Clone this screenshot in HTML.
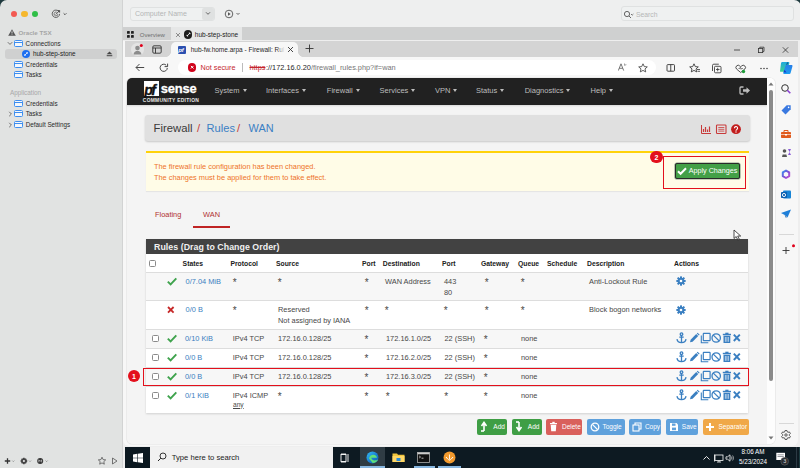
<!DOCTYPE html>
<html><head><meta charset="utf-8">
<style>
*{margin:0;padding:0;box-sizing:border-box}
html,body{width:800px;height:468px;overflow:hidden;background:#1f3a3e;font-family:"Liberation Sans",sans-serif}
.a{position:absolute}
.t{position:absolute;white-space:nowrap;line-height:1}
#side{left:0;top:0;width:122.2px;height:468px;background:#e1e3e2;border-radius:7px 0 0 0}
#tool{left:123px;top:0;width:678px;height:27px;background:#eeefef;border-radius:0 7px 0 0}
#tabs{left:123px;top:27px;width:677px;height:13.5px;background:#cfd0d0}
#win{left:123.2px;top:40px;width:676.8px;height:428px;background:#eeeeee}
#edge{left:125px;top:40px;width:673px;height:405px;background:#f7f7f7;border-radius:0 0 7px 7px;overflow:hidden}
#tb{left:125px;top:447px;width:675px;height:21px;background:#0d1a22}
.fold{position:absolute;width:9px;height:7px;border:1.2px solid #3d8ef0;border-radius:1.5px;background:#f4f7fb}
.fold:before{content:"";position:absolute;left:-1px;top:1px;width:8px;height:0;border-top:1px solid #3d8ef0}
.st{font-size:7px;color:#2a2a2a}
.nav{font-size:7.5px;color:#bdbdbd}
.car{display:inline-block;width:0;height:0;border-left:2.5px solid transparent;border-right:2.5px solid transparent;border-top:3px solid #bdbdbd;margin-left:3px;vertical-align:1px}
.th{font-size:6.8px;font-weight:bold;color:#212121}
.td{font-size:7.4px;color:#474747}
.lk{color:#3a7fc1}
.btn{position:absolute;top:419px;height:16px;border-radius:2px;color:#fff;font-size:6px;font-weight:bold}
.cb{position:absolute;width:7px;height:7px;border:1px solid #8a8a8a;border-radius:1.5px;background:#fff}
</style></head><body>
<!-- mac sidebar -->
<div id="side" class="a"></div>
<div class="a" style="left:10.5px;top:10.5px;width:6.5px;height:6.5px;border-radius:50%;background:#f25a52"></div>
<div class="a" style="left:21px;top:10.5px;width:6.5px;height:6.5px;border-radius:50%;background:#f5b82e"></div>
<div class="a" style="left:31.8px;top:10.5px;width:6.5px;height:6.5px;border-radius:50%;background:#2fbf47"></div>
<svg class="a" style="left:51px;top:9px" width="18" height="10" viewBox="0 0 18 10"><path d="M7.9 2.6A3.7 3.7 0 1 0 8.6 4.9" fill="none" stroke="#555" stroke-width=".9"/><path d="M5.8 3.2A1.9 1.9 0 1 0 6.9 5" fill="none" stroke="#555" stroke-width=".7"/><path d="M4.8 5.4L8.5 1.7M6.6 1.6h2v2" stroke="#444" stroke-width=".9" fill="none"/><path d="M12.6 4.3l1.4 1.4 1.4-1.4" stroke="#444" stroke-width=".9" fill="none"/></svg>
<svg class="a" style="left:8px;top:29px" width="8" height="7" viewBox="0 0 8 7"><path d="M4 .3L7.8 6.7H.2z" fill="#555"/><path d="M4 2.3v2.2M4 5.3v.6" stroke="#e2e3e3" stroke-width=".9"/></svg>
<div class="t st" style="left:18.5px;top:30.1px;font-size:6.2px;color:#a5a5a5;font-weight:bold">Oracle TSX</div>
<svg class="a" style="left:7px;top:41px" width="6" height="5" viewBox="0 0 6 5"><path d="M.8 1.2l2.2 2.2 2.2-2.2" stroke="#666" stroke-width=".9" fill="none"/></svg>
<div class="fold" style="left:14px;top:39.8px"></div>
<div class="t st" style="left:25.6px;top:40.6px;font-size:6.3px">Connections</div>
<div class="a" style="left:5px;top:48.7px;width:112px;height:10.3px;background:#cfd0d0;border-radius:3px"></div>
<div class="a" style="left:22px;top:50px;width:8px;height:8px;border-radius:50%;background:#1e6ff0"></div>
<svg class="a" style="left:22px;top:50px" width="8" height="8" viewBox="0 0 8 8"><path d="M2.6 5.4l2.8-2.8M4.3 2.6h1.1v1.1M3.7 5.4H2.6V4.3" stroke="#fff" stroke-width=".8" fill="none"/></svg>
<div class="t st" style="left:33px;top:50.9px;font-size:6.4px;color:#222">hub-step-stone</div>
<svg class="a" style="left:106px;top:51px" width="7" height="6" viewBox="0 0 7 6"><path d="M3.5 .5L6.3 3.3H.7z" fill="#444"/><rect x=".7" y="4.2" width="5.6" height="1" fill="#444"/></svg>
<div class="fold" style="left:14px;top:60.8px"></div>
<div class="t st" style="left:25.6px;top:61.5px;font-size:6.3px">Credentials</div>
<div class="fold" style="left:14px;top:71.3px"></div>
<div class="t st" style="left:25.6px;top:72px;font-size:6.3px">Tasks</div>
<div class="t st" style="left:9.9px;top:89.5px;font-size:6.4px;color:#a8a8a8">Application</div>
<div class="fold" style="left:14px;top:99.9px"></div>
<div class="t st" style="left:25.7px;top:100.6px;font-size:6.3px">Credentials</div>
<svg class="a" style="left:8px;top:111.1px" width="5" height="6" viewBox="0 0 5 6"><path d="M1.2 .8l2.2 2.2-2.2 2.2" stroke="#666" stroke-width=".9" fill="none"/></svg>
<div class="fold" style="left:14px;top:110.4px"></div>
<div class="t st" style="left:25.7px;top:111.1px;font-size:6.3px">Tasks</div>
<svg class="a" style="left:8px;top:121.6px" width="5" height="6" viewBox="0 0 5 6"><path d="M1.2 .8l2.2 2.2-2.2 2.2" stroke="#666" stroke-width=".9" fill="none"/></svg>
<div class="fold" style="left:14px;top:120.9px"></div>
<div class="t st" style="left:25.7px;top:121.6px;font-size:6.3px">Default Settings</div>
<!-- sidebar bottom -->
<svg class="a" style="left:3px;top:456px" width="50" height="10" viewBox="0 0 50 10"><path d="M4.5 2.3v5.4M1.8 5h5.4" stroke="#333" stroke-width="1.3"/><path d="M9.3 4.6l1 1 1-1" stroke="#777" stroke-width=".7" fill="none"/><path d="M23.33 4.08 L24.22 4.26 L24.22 5.74 L23.33 5.92 L23.27 6.07 L23.77 6.82 L22.72 7.87 L21.97 7.37 L21.82 7.43 L21.64 8.32 L20.16 8.32 L19.98 7.43 L19.83 7.37 L19.08 7.87 L18.03 6.82 L18.53 6.07 L18.47 5.92 L17.58 5.74 L17.58 4.26 L18.47 4.08 L18.53 3.93 L18.03 3.18 L19.08 2.13 L19.83 2.63 L19.98 2.57 L20.16 1.68 L21.64 1.68 L21.82 2.57 L21.97 2.63 L22.72 2.13 L23.77 3.18 L23.27 3.93z" fill="#444"/><circle cx="20.9" cy="5" r="1.1" fill="#e2e3e3"/><path d="M26 4.6l1 1 1-1" stroke="#777" stroke-width=".7" fill="none"/><circle cx="37.2" cy="5" r="3" fill="#333"/><path d="M35.8 6.3V3.8l1.4 1.6 1.4-1.6v2.5" stroke="#e2e3e3" stroke-width=".6" fill="none"/><path d="M42.6 4.6l1 1 1-1" stroke="#777" stroke-width=".7" fill="none"/></svg>
<svg class="a" style="left:97px;top:456px" width="24" height="10" viewBox="0 0 24 10"><path d="M5 1.2l1.1 2.4 2.6.3-1.9 1.7.5 2.6L5 6.9 2.7 8.2l.5-2.6L1.3 3.9l2.6-.3z" fill="none" stroke="#555" stroke-width=".8"/><path d="M15.5 2v6l4.5-3z" fill="none" stroke="#555" stroke-width=".8"/></svg>

<!-- royal toolbar -->
<div id="tool" class="a"></div>
<div class="a" style="left:122px;top:0;width:1.2px;height:468px;background:#d2d3d3"></div>
<div class="a" style="left:129.6px;top:6.6px;width:85px;height:14px;border-radius:3px;background:#eff1f1;border:0.6px solid #dfe1e1"></div>
<div class="a" style="left:202px;top:7.5px;width:11.5px;height:12px;border-radius:2px;background:#dfe1e1"></div>
<svg class="a" style="left:205px;top:11px" width="6" height="5" viewBox="0 0 6 5"><path d="M1 1.3l2 2 2-2" stroke="#555" stroke-width=".9" fill="none"/></svg>
<div class="t" style="left:134.9px;top:10.5px;font-size:7.1px;color:#b4b6b6">Computer Name</div>
<svg class="a" style="left:224px;top:9px" width="20" height="10" viewBox="0 0 20 10"><circle cx="5" cy="5" r="3.8" fill="none" stroke="#555" stroke-width=".9"/><path d="M4 3.2v3.6L6.7 5z" fill="#555"/><path d="M12.5 4l1.5 1.5L15.5 4" stroke="#555" stroke-width=".9" fill="none"/></svg>
<div class="a" style="left:621px;top:6px;width:173px;height:14.5px;border-radius:3px;background:#eff1f1;border:0.6px solid #dfe1e1"></div>
<svg class="a" style="left:623px;top:9.5px" width="12" height="9" viewBox="0 0 12 9"><circle cx="4" cy="4" r="2.6" fill="none" stroke="#555" stroke-width=".9"/><path d="M6 6l2 2" stroke="#555" stroke-width=".9"/><path d="M8 4l1.2 1.2L10.4 4" stroke="#555" stroke-width=".8" fill="none"/></svg>
<div class="t" style="left:636px;top:11.5px;font-size:6.8px;color:#b5b7b7">Search</div>

<!-- royal tabs -->
<div id="tabs" class="a"></div>
<div class="a" style="left:170.7px;top:27px;width:71px;height:13px;background:#e6e7e7"></div>
<svg class="a" style="left:126.8px;top:30.8px" width="7" height="7" viewBox="0 0 7 7"><rect x="0" y="0" width="2.8" height="2.8" rx=".6" fill="#222"/><rect x="4" y="0" width="2.8" height="2.8" rx=".6" fill="#222"/><rect x="0" y="4" width="2.8" height="2.8" rx=".6" fill="#222"/><rect x="4" y="4" width="2.8" height="2.8" rx=".6" fill="#222"/></svg>
<div class="t" style="left:139.8px;top:31.7px;font-size:6px;color:#6e6e6e">Overview</div>
<svg class="a" style="left:175px;top:32px" width="6" height="6" viewBox="0 0 6 6"><path d="M1 1l4 4M5 1L1 5" stroke="#666" stroke-width=".7"/></svg>
<div class="a" style="left:183.7px;top:30px;width:8.8px;height:8.8px;border-radius:50%;background:#1e1e1e"></div>
<svg class="a" style="left:183.7px;top:30px" width="9" height="9" viewBox="0 0 9 9"><path d="M3 6l3-3M4.8 3H6v1.2M4.2 6H3V4.8" stroke="#fff" stroke-width=".8" fill="none"/></svg>
<div class="t" style="left:194.8px;top:32px;font-size:6.5px;color:#1a1a1a">hub-step-stone</div>

<div id="win" class="a"></div>
<!-- edge frame -->
<div class="a" style="left:123.2px;top:40.5px;width:674.8px;height:405px;background:#f7f7f7;border-radius:0 0 6px 6px"></div>
<div class="a" style="left:125px;top:40.5px;width:673px;height:16.5px;background:#d4d4d4"></div>
<!-- profile -->
<div class="a" style="left:131px;top:43px;width:12.5px;height:12.5px;border-radius:50%;background:#e4e4e4"></div>
<svg class="a" style="left:131px;top:43px" width="13" height="13" viewBox="0 0 13 13"><circle cx="6.5" cy="5" r="2.3" fill="#8c8c8c"/><path d="M2.5 11.5c.5-2.5 2-3.7 4-3.7s3.5 1.2 4 3.7z" fill="#8c8c8c"/><circle cx="10.3" cy="2.6" r="1.5" fill="#e0001b"/></svg>
<svg class="a" style="left:152px;top:45px" width="10" height="9" viewBox="0 0 10 9"><rect x=".8" y=".8" width="8.4" height="7.4" rx="1.2" fill="none" stroke="#333" stroke-width=".9"/><path d="M.8 3h8.4M3.5 3v5.2" stroke="#333" stroke-width=".9"/></svg>
<!-- active tab -->
<div class="a" style="left:171px;top:42px;width:127px;height:15px;background:#f7f7f7;border-radius:5px 5px 0 0"></div>
<div class="a" style="left:166px;top:52px;width:5px;height:5px;background:radial-gradient(circle at 0 0,#d4d4d4 4.6px,#f7f7f7 5px)"></div>
<div class="a" style="left:298px;top:52px;width:5px;height:5px;background:radial-gradient(circle at 100% 0,#d4d4d4 4.6px,#f7f7f7 5px)"></div>
<div class="a" style="left:177.5px;top:45.5px;width:8px;height:8px;background:#2b4fb0;border-radius:1px"></div>
<div class="t" style="left:178.3px;top:46.5px;font-size:6px;color:#fff;font-style:italic;font-weight:bold;letter-spacing:-.3px">pf</div>
<div class="t" style="left:190.7px;top:46.6px;font-size:6.5px;color:#1f1f1f">hub-fw.home.arpa - Firewall: Rul</div>
<div class="a" style="left:276px;top:43px;width:9px;height:12px;background:linear-gradient(90deg,rgba(247,247,247,0),#f7f7f7)"></div>
<svg class="a" style="left:287px;top:46px" width="7" height="7" viewBox="0 0 7 7"><path d="M1 1l5 5M6 1L1 6" stroke="#333" stroke-width=".9"/></svg>
<svg class="a" style="left:305px;top:44px" width="9" height="9" viewBox="0 0 9 9"><path d="M4.5 .5v8M.5 4.5h8" stroke="#333" stroke-width=".9"/></svg>
<svg class="a" style="left:733px;top:45.5px" width="60" height="8" viewBox="0 0 60 8"><path d="M1 4h6" stroke="#333" stroke-width=".8"/><rect x="25.5" y="2.4" width="4.2" height="4.2" fill="none" stroke="#333" stroke-width=".8"/><path d="M26.8 2.4V1.2h4.2v4.2H29.7" stroke="#333" stroke-width=".8" fill="none"/><path d="M49.8 1.3l5.4 5.4M55.2 1.3l-5.4 5.4" stroke="#333" stroke-width=".8"/></svg>
<!-- address row -->
<svg class="a" style="left:135px;top:63px" width="10" height="9" viewBox="0 0 10 9"><path d="M9.2 4.5H1.2M4.5 1L1 4.5 4.5 8" stroke="#333" stroke-width=".9" fill="none"/></svg>
<svg class="a" style="left:158.5px;top:63px" width="10" height="10" viewBox="0 0 10 10"><path d="M8.3 5A3.6 3.6 0 1 1 7.2 2.2" stroke="#333" stroke-width=".9" fill="none"/><path d="M8.6 .6v3H5.6" stroke="#333" stroke-width=".9" fill="none"/></svg>
<div class="a" style="left:177.75px;top:59.5px;width:478px;height:15.8px;background:#fff;border-radius:8px"></div>
<div class="a" style="left:187.8px;top:63.4px;width:8.3px;height:8.3px;border-radius:50%;background:#d0021b"></div>
<svg class="a" style="left:187.8px;top:63.4px" width="9" height="9" viewBox="0 0 9 9"><path d="M2.9 2.9l2.6 2.6M5.5 2.9L2.9 5.5" stroke="#fff" stroke-width="1"/></svg>
<div class="t" style="left:200.5px;top:63.9px;font-size:7.25px;color:#c4262e">Not secure</div>
<div class="a" style="left:242px;top:63px;width:.8px;height:9px;background:#bbb"></div>
<div class="t" style="left:249.5px;top:63.9px;font-size:7.35px;color:#c4262e;text-decoration:line-through">https</div>
<div class="t" style="left:266px;top:63.9px;font-size:7.35px;color:#1f1f1f">://172.16.0.20<span style="color:#767676">/firewall_rules.php?if=wan</span></div>
<svg class="a" style="left:618px;top:62px" width="60" height="12" viewBox="0 0 60 12"><path d="M.3 8.6L3 1.8l2.7 6.8M1.3 6.3h3.4" stroke="#555" stroke-width=".8" fill="none"/><path d="M6.5 1.5v2.2M7.6 2c.4.4.4 1.1 0 1.5" stroke="#555" stroke-width=".55" fill="none"/><path d="M25 1.8l1.3 2.8 3 .3-2.3 2 .7 3L25 8.4l-2.7 1.5.7-3-2.3-2 3-.3z" fill="none" stroke="#444" stroke-width=".85"/><rect x="49" y="2.6" width="7.5" height="6.6" rx=".8" fill="none" stroke="#333" stroke-width=".9"/><path d="M52.75 2.6v6.6" stroke="#333" stroke-width=".9"/></svg>
<svg class="a" style="left:688px;top:61.5px" width="104" height="13" viewBox="0 0 104 13"><path d="M6 1.8l1.3 2.8 3 .3-2.3 2 .7 3L6 8.4 3.3 9.9l.7-3-2.3-2 3-.3z" fill="none" stroke="#333" stroke-width=".85"/><path d="M9 7.5h3M9.5 9.3h2.5" stroke="#333" stroke-width=".8"/><rect x="26.5" y="4.3" width="6.5" height="6.5" rx="1" fill="none" stroke="#333" stroke-width=".85"/><path d="M24.5 9V3.5a1.3 1.3 0 0 1 1.3-1.3h5" stroke="#333" stroke-width=".85" fill="none"/><path d="M29.7 5.8v3.5M28 7.5h3.5" stroke="#333" stroke-width=".8"/><path d="M52.7 10.5L48.5 7a2.2 2.2 0 0 1 3.3-3l.9.8.9-.8a2.2 2.2 0 0 1 3.3 3z" fill="none" stroke="#333" stroke-width=".85"/><path d="M50.5 6.5h1.2l.6-1.2.8 2 .5-.8h1.3" stroke="#333" stroke-width=".6" fill="none"/><circle cx="55.5" cy="9.5" r="1.7" fill="#1f9d3a"/><circle cx="73" cy="6.5" r=".75" fill="#333"/><circle cx="76" cy="6.5" r=".75" fill="#333"/><circle cx="79" cy="6.5" r=".75" fill="#333"/></svg>
<svg class="a" style="left:779px;top:61px" width="15" height="14" viewBox="0 0 15 14"><defs><linearGradient id="cp1" x1="0" y1="0" x2="0" y2="1"><stop offset="0" stop-color="#1fa8e0"/><stop offset="1" stop-color="#3fd18c"/></linearGradient><linearGradient id="cp2" x1="0" y1="0" x2="0" y2="1"><stop offset="0" stop-color="#2a7ee8"/><stop offset="1" stop-color="#1a9cf0"/></linearGradient></defs><path d="M3.2 1h6.2c.9 0 1.2.6.9 1.4L8 9.8c-.3.7-.8 1-1.6 1H2c-.9 0-1.2-.6-.9-1.4L2 2.2C2.2 1.4 2.6 1 3.2 1z" fill="url(#cp1)"/><path d="M6.3 4h6.2c.9 0 1.2.6.9 1.4l-1.8 6.5c-.3.8-.7 1.1-1.5 1.1H5.2c-.9 0-1.2-.6-.9-1.4L6.4 5c.2-.7.6-1 1-1z" fill="url(#cp2)"/><path d="M8.2 1.2c.8 0 1.2.5 1 1.2L9 3.2 6.8 4z" fill="#0b4f8a" opacity=".8"/><path d="M4.6 11.2l.9-2.4 2 2.6z" fill="#1537c8"/></svg>
<!-- viewport -->
<div class="a" style="left:127px;top:77.7px;width:648px;height:366.5px;background:#f4f4f4;border-radius:5px 5px 5px 5px;box-shadow:0 0 0 .6px #e3e3e3"></div>
<div class="a" style="left:127px;top:77.7px;width:640px;height:27.3px;background:#212121;border-radius:5px 0 0 0;box-shadow:0 1px 2px rgba(0,0,0,.12)"></div>
<!-- logo -->
<div class="a" style="left:144px;top:81px;width:15px;height:15px;background:#fff"></div>
<div class="t" style="left:144.3px;top:82.6px;font-size:14.2px;font-weight:bold;font-style:italic;color:#111;letter-spacing:-1.6px;-webkit-text-stroke:.35px #111">pf</div>
<div class="t" style="left:160.8px;top:83.2px;font-size:12.9px;font-weight:bold;color:#fff;letter-spacing:-.15px;-webkit-text-stroke:.3px #fff">sense</div>
<div class="t" style="left:142.8px;top:98.6px;font-size:4.9px;font-weight:bold;color:#e8e8e8;letter-spacing:.3px">COMMUNITY EDITION</div>
<!-- nav -->
<div class="t nav" style="left:214.5px;top:87px">System<i class="car"></i></div>
<div class="t nav" style="left:266px;top:87px">Interfaces<i class="car"></i></div>
<div class="t nav" style="left:326.8px;top:87px">Firewall<i class="car"></i></div>
<div class="t nav" style="left:379.6px;top:87px">Services<i class="car"></i></div>
<div class="t nav" style="left:434.9px;top:87px">VPN<i class="car"></i></div>
<div class="t nav" style="left:476px;top:87px">Status<i class="car"></i></div>
<div class="t nav" style="left:524.7px;top:87px">Diagnostics<i class="car"></i></div>
<div class="t nav" style="left:590.6px;top:87px">Help<i class="car"></i></div>
<svg class="a" style="left:738.5px;top:85.5px" width="12" height="9" viewBox="0 0 12 9"><path d="M4.5 1H2a1 1 0 0 0-1 1v5a1 1 0 0 0 1 1h2.5" stroke="#bdbdbd" stroke-width="1.3" fill="none"/><path d="M4 3.3h3.5V1.2L11 4.5 7.5 7.8V5.7H4z" fill="#bdbdbd"/></svg>
<!-- breadcrumb -->
<div class="a" style="left:145px;top:115px;width:604.5px;height:26px;background:#e0e0e0;border-radius:3px;box-shadow:0 1px 2px rgba(0,0,0,.18)"></div>
<div class="t" style="left:153.6px;top:122.6px;font-size:11.3px;color:#3a3a3a">Firewall</div>
<div class="t" style="left:197px;top:122.6px;font-size:11.3px;color:#c83a3a">/</div>
<div class="t" style="left:206.6px;top:122.6px;font-size:11.1px;color:#3b7fc4">Rules</div>
<div class="t" style="left:237px;top:122.6px;font-size:11.3px;color:#c83a3a">/</div>
<div class="t" style="left:248.6px;top:122.6px;font-size:10.9px;color:#3b7fc4">WAN</div>
<svg class="a" style="left:700px;top:124px" width="44" height="11" viewBox="0 0 44 11"><path d="M1.5 1v8.5h9.5" stroke="#c83a3a" stroke-width="1" fill="none"/><path d="M3.5 8V5M5.5 8V3M7.5 8V5.5M9.5 8V2.5" stroke="#c83a3a" stroke-width="1.2"/><rect x="16.5" y="1" width="9.5" height="8.5" rx=".8" fill="none" stroke="#c83a3a" stroke-width="1.1"/><path d="M18.3 3.5h6M18.3 5.3h6M18.3 7.1h6" stroke="#c83a3a" stroke-width=".8"/><circle cx="36" cy="5.2" r="4.9" fill="#c21d1d"/><path d="M34.4 4.2a1.6 1.6 0 1 1 2.3 1.4c-.5.3-.7.6-.7 1.1" stroke="#fff" stroke-width="1.1" fill="none"/><circle cx="36" cy="8" r=".65" fill="#fff"/></svg>
<!-- notice -->
<div class="a" style="left:145.5px;top:151px;width:603.2px;height:39.7px;background:#fffce7;border-top:2.8px solid #ffd20a;box-shadow:0 1px 1px rgba(0,0,0,.06)"></div>
<div class="t" style="left:154px;top:163px;font-size:7.4px;color:#ee7328">The firewall rule configuration has been changed.</div>
<div class="t" style="left:154px;top:173.8px;font-size:7.4px;color:#ee7328">The changes must be applied for them to take effect.</div>
<div class="a" style="left:674.8px;top:162.7px;width:65px;height:16.5px;background:#43a047;border:1.2px solid #2a2a2a;border-radius:2px;box-shadow:0 0 0 .6px #8aa08a"></div>
<svg class="a" style="left:677px;top:166px" width="10" height="10" viewBox="0 0 10 10"><path d="M1 5.2l2.6 2.6L9 2.2" stroke="#fff" stroke-width="2" fill="none"/></svg>
<div class="t" style="left:688.7px;top:167.3px;font-size:7.2px;color:#fff">Apply Changes</div>
<!-- tabs -->
<div class="t" style="left:155px;top:210.8px;font-size:7.4px;color:#b03030">Floating</div>
<div class="t" style="left:203px;top:210.8px;font-size:7.4px;color:#b03030">WAN</div>
<div class="a" style="left:193px;top:226px;width:37px;height:2.2px;background:#c02424"></div>
<!-- table -->
<div class="a" style="left:146px;top:239px;width:602.2px;height:174px;background:#fff;box-shadow:0 1px 2px rgba(0,0,0,.15)"></div>
<div class="a" style="left:146px;top:239px;width:602.2px;height:15px;background:#424242"></div>
<div class="t" style="left:154px;top:242.8px;font-size:8.8px;font-weight:bold;color:#f0f0f0;letter-spacing:.05px">Rules (Drag to Change Order)</div>
<div class="a" style="left:146px;top:272px;width:602.2px;height:28.2px;background:#f7f7f7;border-top:.8px solid #ddd"></div>
<div class="a" style="left:146px;top:300.2px;width:602.2px;height:29px;background:#fff;border-top:.8px solid #ddd"></div>
<div class="a" style="left:146px;top:329.2px;width:602.2px;height:19px;background:#f7f7f7;border-top:.8px solid #ddd"></div>
<div class="a" style="left:146px;top:348.2px;width:602.2px;height:19px;background:#fff;border-top:.8px solid #ddd"></div>
<div class="a" style="left:146px;top:367.2px;width:602.2px;height:19.2px;background:#f7f7f7;border-top:.8px solid #ddd"></div>
<div class="a" style="left:146px;top:386.4px;width:602.2px;height:26.6px;background:#fff;border-top:.8px solid #ddd"></div>
<!-- header row -->
<div class="cb" style="left:149px;top:259.5px"></div>
<div class="t th" style="left:182.6px;top:261px">States</div>
<div class="t th" style="left:230.4px;top:261px">Protocol</div>
<div class="t th" style="left:276px;top:261px">Source</div>
<div class="t th" style="left:362px;top:261px">Port</div>
<div class="t th" style="left:382.8px;top:261px">Destination</div>
<div class="t th" style="left:442px;top:261px">Port</div>
<div class="t th" style="left:481px;top:261px">Gateway</div>
<div class="t th" style="left:518px;top:261px">Queue</div>
<div class="t th" style="left:547px;top:261px">Schedule</div>
<div class="t th" style="left:587px;top:261px">Description</div>
<div class="t th" style="left:674px;top:261px">Actions</div>
<svg class="a" style="left:166.8px;top:276.50px" width="10" height="9" viewBox="0 0 10 9"><path d="M.8 4.6l2.8 2.8L9.3 1.3" stroke="#3fa34d" stroke-width="1.9" fill="none"/></svg>
<div class="t td lk" style="left:185.6px;top:277.70px;">0/7.04 MiB</div>
<div class="t td" style="left:232.7px;top:277.60px;font-size:10px">*</div>
<div class="t td" style="left:277.7px;top:277.60px;font-size:10px">*</div>
<div class="t td" style="left:364.7px;top:277.60px;font-size:10px">*</div>
<div class="t td" style="left:385px;top:277.70px;">WAN Address</div>
<div class="t td" style="left:444px;top:277.70px;">443</div>
<div class="t td" style="left:444px;top:288.70px;">80</div>
<div class="t td" style="left:484.7px;top:277.60px;font-size:10px">*</div>
<div class="t td" style="left:520.7px;top:277.60px;font-size:10px">*</div>
<div class="t td" style="left:589px;top:277.70px;">Anti-Lockout Rule</div>
<svg class="a" style="left:676px;top:276.00px" width="10" height="10" viewBox="0 0 10 10"><g fill="#3a7fc1"><circle cx="5" cy="5" r="3.3"/><rect x="4" y=".3" width="2" height="9.4" rx=".4"/><rect x="4" y=".3" width="2" height="9.4" rx=".4" transform="rotate(45 5 5)"/><rect x="4" y=".3" width="2" height="9.4" rx=".4" transform="rotate(90 5 5)"/><rect x="4" y=".3" width="2" height="9.4" rx=".4" transform="rotate(135 5 5)"/></g><circle cx="5" cy="5" r="1.3" fill="#fff"/></svg>
<svg class="a" style="left:166.5px;top:305.70px" width="8" height="8" viewBox="0 0 8 8"><path d="M1 1l5.6 5.6M6.6 1L1 6.6" stroke="#c62828" stroke-width="1.8"/></svg>
<div class="t td lk" style="left:185.6px;top:306.20px;">0/0 B</div>
<div class="t td" style="left:232.7px;top:306.10px;font-size:10px">*</div>
<div class="t td" style="left:278px;top:306.20px;">Reserved</div>
<div class="t td" style="left:278px;top:316.70px;">Not assigned by IANA</div>
<div class="t td" style="left:364.7px;top:306.10px;font-size:10px">*</div>
<div class="t td" style="left:384.7px;top:306.10px;font-size:10px">*</div>
<div class="t td" style="left:443.7px;top:306.10px;font-size:10px">*</div>
<div class="t td" style="left:484.7px;top:306.10px;font-size:10px">*</div>
<div class="t td" style="left:520.7px;top:306.10px;font-size:10px">*</div>
<div class="t td" style="left:589px;top:306.20px;">Block bogon networks</div>
<svg class="a" style="left:676px;top:304.50px" width="10" height="10" viewBox="0 0 10 10"><g fill="#3a7fc1"><circle cx="5" cy="5" r="3.3"/><rect x="4" y=".3" width="2" height="9.4" rx=".4"/><rect x="4" y=".3" width="2" height="9.4" rx=".4" transform="rotate(45 5 5)"/><rect x="4" y=".3" width="2" height="9.4" rx=".4" transform="rotate(90 5 5)"/><rect x="4" y=".3" width="2" height="9.4" rx=".4" transform="rotate(135 5 5)"/></g><circle cx="5" cy="5" r="1.3" fill="#fff"/></svg>
<div class="cb" style="left:151.5px;top:334.50px"></div>
<svg class="a" style="left:166.8px;top:333.50px" width="10" height="9" viewBox="0 0 10 9"><path d="M.8 4.6l2.8 2.8L9.3 1.3" stroke="#3fa34d" stroke-width="1.9" fill="none"/></svg>
<div class="t td lk" style="left:185px;top:334.70px;">0/10 KiB</div>
<div class="t td" style="left:232.8px;top:334.70px;">IPv4 TCP</div>
<div class="t td" style="left:278px;top:334.70px;">172.16.0.128/25</div>
<div class="t td" style="left:364.5px;top:334.60px;font-size:10px">*</div>
<div class="t td" style="left:386px;top:334.70px;">172.16.1.0/25</div>
<div class="t td" style="left:444.5px;top:334.70px;">22 (SSH)</div>
<div class="t td" style="left:483.7px;top:334.60px;font-size:10px">*</div>
<div class="t td" style="left:521px;top:334.70px;">none</div>
<svg class="a" style="left:676px;top:332.00px" width="66" height="12" viewBox="0 0 66 12"><g stroke="#3a7fc1" fill="none" stroke-width="1.3"><circle cx="5.5" cy="2.2" r="1.3"/><path d="M5.5 3.5v7.2M3.3 5.2h4.4M1 7.2c.3 2.4 2.2 3.5 4.5 3.5s4.2-1.1 4.5-3.5"/></g><path d="M14 10.3l.6-2.6 5.6-5.6 2 2-5.6 5.6z" fill="#3a7fc1"/><path d="M20.8 1.5l.8-.8 2 2-.8.8z" fill="#3a7fc1"/><g stroke="#3a7fc1" fill="none" stroke-width="1.1"><rect x="27.3" y="1.4" width="6.8" height="7.3" rx=".5" stroke-width="1.2"/><path d="M25.3 3.4v7.3h7" stroke-width="1.1"/><circle cx="40.2" cy="6" r="4.2" stroke-width="1.3"/><path d="M37.3 3.1l5.8 5.8" stroke-width="1.3"/></g><g fill="#3a7fc1"><rect x="46.8" y="1.8" width="8.2" height="1.4"/><rect x="49.3" y=".7" width="3.2" height="1.5"/><path d="M47.5 3.7h6.8v7.3h-6.8z"/></g><g stroke="#fff" stroke-width=".6"><path d="M49.4 5v4.8M50.9 5v4.8M52.4 5v4.8"/></g><path d="M57.8 2.6l6 6.4M63.8 2.6l-6 6.4" stroke="#3a7fc1" stroke-width="1.9"/></svg>
<div class="cb" style="left:151.5px;top:353.50px"></div>
<svg class="a" style="left:166.8px;top:352.50px" width="10" height="9" viewBox="0 0 10 9"><path d="M.8 4.6l2.8 2.8L9.3 1.3" stroke="#3fa34d" stroke-width="1.9" fill="none"/></svg>
<div class="t td lk" style="left:185px;top:353.70px;">0/0 B</div>
<div class="t td" style="left:232.8px;top:353.70px;">IPv4 TCP</div>
<div class="t td" style="left:278px;top:353.70px;">172.16.0.128/25</div>
<div class="t td" style="left:364.5px;top:353.60px;font-size:10px">*</div>
<div class="t td" style="left:386px;top:353.70px;">172.16.2.0/25</div>
<div class="t td" style="left:444.5px;top:353.70px;">22 (SSH)</div>
<div class="t td" style="left:483.7px;top:353.60px;font-size:10px">*</div>
<div class="t td" style="left:521px;top:353.70px;">none</div>
<svg class="a" style="left:676px;top:351.00px" width="66" height="12" viewBox="0 0 66 12"><g stroke="#3a7fc1" fill="none" stroke-width="1.3"><circle cx="5.5" cy="2.2" r="1.3"/><path d="M5.5 3.5v7.2M3.3 5.2h4.4M1 7.2c.3 2.4 2.2 3.5 4.5 3.5s4.2-1.1 4.5-3.5"/></g><path d="M14 10.3l.6-2.6 5.6-5.6 2 2-5.6 5.6z" fill="#3a7fc1"/><path d="M20.8 1.5l.8-.8 2 2-.8.8z" fill="#3a7fc1"/><g stroke="#3a7fc1" fill="none" stroke-width="1.1"><rect x="27.3" y="1.4" width="6.8" height="7.3" rx=".5" stroke-width="1.2"/><path d="M25.3 3.4v7.3h7" stroke-width="1.1"/><circle cx="40.2" cy="6" r="4.2" stroke-width="1.3"/><path d="M37.3 3.1l5.8 5.8" stroke-width="1.3"/></g><g fill="#3a7fc1"><rect x="46.8" y="1.8" width="8.2" height="1.4"/><rect x="49.3" y=".7" width="3.2" height="1.5"/><path d="M47.5 3.7h6.8v7.3h-6.8z"/></g><g stroke="#fff" stroke-width=".6"><path d="M49.4 5v4.8M50.9 5v4.8M52.4 5v4.8"/></g><path d="M57.8 2.6l6 6.4M63.8 2.6l-6 6.4" stroke="#3a7fc1" stroke-width="1.9"/></svg>
<div class="cb" style="left:151.5px;top:372.50px"></div>
<svg class="a" style="left:166.8px;top:371.50px" width="10" height="9" viewBox="0 0 10 9"><path d="M.8 4.6l2.8 2.8L9.3 1.3" stroke="#3fa34d" stroke-width="1.9" fill="none"/></svg>
<div class="t td lk" style="left:185px;top:372.70px;">0/0 B</div>
<div class="t td" style="left:232.8px;top:372.70px;">IPv4 TCP</div>
<div class="t td" style="left:278px;top:372.70px;">172.16.0.128/25</div>
<div class="t td" style="left:364.5px;top:372.60px;font-size:10px">*</div>
<div class="t td" style="left:386px;top:372.70px;">172.16.3.0/25</div>
<div class="t td" style="left:444.5px;top:372.70px;">22 (SSH)</div>
<div class="t td" style="left:483.7px;top:372.60px;font-size:10px">*</div>
<div class="t td" style="left:521px;top:372.70px;">none</div>
<svg class="a" style="left:676px;top:370.00px" width="66" height="12" viewBox="0 0 66 12"><g stroke="#3a7fc1" fill="none" stroke-width="1.3"><circle cx="5.5" cy="2.2" r="1.3"/><path d="M5.5 3.5v7.2M3.3 5.2h4.4M1 7.2c.3 2.4 2.2 3.5 4.5 3.5s4.2-1.1 4.5-3.5"/></g><path d="M14 10.3l.6-2.6 5.6-5.6 2 2-5.6 5.6z" fill="#3a7fc1"/><path d="M20.8 1.5l.8-.8 2 2-.8.8z" fill="#3a7fc1"/><g stroke="#3a7fc1" fill="none" stroke-width="1.1"><rect x="27.3" y="1.4" width="6.8" height="7.3" rx=".5" stroke-width="1.2"/><path d="M25.3 3.4v7.3h7" stroke-width="1.1"/><circle cx="40.2" cy="6" r="4.2" stroke-width="1.3"/><path d="M37.3 3.1l5.8 5.8" stroke-width="1.3"/></g><g fill="#3a7fc1"><rect x="46.8" y="1.8" width="8.2" height="1.4"/><rect x="49.3" y=".7" width="3.2" height="1.5"/><path d="M47.5 3.7h6.8v7.3h-6.8z"/></g><g stroke="#fff" stroke-width=".6"><path d="M49.4 5v4.8M50.9 5v4.8M52.4 5v4.8"/></g><path d="M57.8 2.6l6 6.4M63.8 2.6l-6 6.4" stroke="#3a7fc1" stroke-width="1.9"/></svg>
<div class="cb" style="left:151.5px;top:391.50px"></div>
<svg class="a" style="left:166.8px;top:390.50px" width="10" height="9" viewBox="0 0 10 9"><path d="M.8 4.6l2.8 2.8L9.3 1.3" stroke="#3fa34d" stroke-width="1.9" fill="none"/></svg>
<div class="t td lk" style="left:185px;top:391.70px;">0/1 KiB</div>
<div class="t td" style="left:232.8px;top:391.70px;">IPv4 ICMP</div>
<div class="t td" style="left:233px;top:401.50px;font-size:6.6px;text-decoration:underline;color:#4a4a4a">any</div>
<div class="t td" style="left:277.7px;top:391.60px;font-size:10px">*</div>
<div class="t td" style="left:364.5px;top:391.60px;font-size:10px">*</div>
<div class="t td" style="left:385.7px;top:391.60px;font-size:10px">*</div>
<div class="t td" style="left:444.2px;top:391.60px;font-size:10px">*</div>
<div class="t td" style="left:483.7px;top:391.60px;font-size:10px">*</div>
<div class="t td" style="left:521px;top:391.70px;">none</div>
<svg class="a" style="left:676px;top:389.00px" width="66" height="12" viewBox="0 0 66 12"><g stroke="#3a7fc1" fill="none" stroke-width="1.3"><circle cx="5.5" cy="2.2" r="1.3"/><path d="M5.5 3.5v7.2M3.3 5.2h4.4M1 7.2c.3 2.4 2.2 3.5 4.5 3.5s4.2-1.1 4.5-3.5"/></g><path d="M14 10.3l.6-2.6 5.6-5.6 2 2-5.6 5.6z" fill="#3a7fc1"/><path d="M20.8 1.5l.8-.8 2 2-.8.8z" fill="#3a7fc1"/><g stroke="#3a7fc1" fill="none" stroke-width="1.1"><rect x="27.3" y="1.4" width="6.8" height="7.3" rx=".5" stroke-width="1.2"/><path d="M25.3 3.4v7.3h7" stroke-width="1.1"/><circle cx="40.2" cy="6" r="4.2" stroke-width="1.3"/><path d="M37.3 3.1l5.8 5.8" stroke-width="1.3"/></g><g fill="#3a7fc1"><rect x="46.8" y="1.8" width="8.2" height="1.4"/><rect x="49.3" y=".7" width="3.2" height="1.5"/><path d="M47.5 3.7h6.8v7.3h-6.8z"/></g><g stroke="#fff" stroke-width=".6"><path d="M49.4 5v4.8M50.9 5v4.8M52.4 5v4.8"/></g><path d="M57.8 2.6l6 6.4M63.8 2.6l-6 6.4" stroke="#3a7fc1" stroke-width="1.9"/></svg>
<!-- annotations -->
<div class="a" style="left:143.2px;top:367.7px;width:605.4px;height:18.6px;border:1.7px solid #e3101c"></div>
<div class="a" style="left:128px;top:370px;width:12px;height:12px;border-radius:50%;background:#e3101c"></div>
<div class="t" style="left:128px;top:372.6px;width:12px;text-align:center;font-size:7px;font-weight:bold;color:#fff">1</div>
<div class="a" style="left:663.3px;top:155.8px;width:82.4px;height:33px;border:1.8px solid #e3101c"></div>
<div class="a" style="left:650.2px;top:150.8px;width:12.6px;height:12.6px;border-radius:50%;background:#e3101c"></div>
<div class="t" style="left:650.2px;top:153.6px;width:12.6px;text-align:center;font-size:7px;font-weight:bold;color:#fff">2</div>
<!-- buttons -->
<div class="btn" style="left:477px;width:30px;background:#3f9e45"></div>
<svg class="a" style="left:480px;top:421px" width="8" height="11" viewBox="0 0 8 11"><path d="M4 10V2.5M1.5 5L4 1.5 6.5 5" stroke="#fff" stroke-width="1.6" fill="none"/><path d="M1 10h3" stroke="#fff" stroke-width="1.6"/></svg>
<div class="t" style="left:493.3px;top:424.4px;font-size:6.5px;color:#fff">Add</div>
<div class="btn" style="left:512px;width:29.5px;background:#3f9e45"></div>
<svg class="a" style="left:515px;top:421px" width="8" height="11" viewBox="0 0 8 11"><path d="M4 1v7.5M1.5 6L4 9.5 6.5 6" stroke="#fff" stroke-width="1.6" fill="none"/><path d="M1 1h3" stroke="#fff" stroke-width="1.6"/></svg>
<div class="t" style="left:527.8px;top:424.4px;font-size:6.5px;color:#fff">Add</div>
<div class="btn" style="left:546px;width:36px;background:#d9605c"></div>
<svg class="a" style="left:549px;top:421px" width="9" height="11" viewBox="0 0 9 11"><rect x="1" y="2" width="7" height="1.2" fill="#fff"/><rect x="3.3" y=".8" width="2.4" height="1.4" fill="#fff"/><path d="M1.7 3.8h5.6l-.5 6.4H2.2z" fill="#fff"/></svg>
<div class="t" style="left:562px;top:424.4px;font-size:6.5px;color:#fff">Delete</div>
<div class="btn" style="left:587px;width:38px;background:#5fa1dc"></div>
<svg class="a" style="left:590px;top:421.5px" width="10" height="10" viewBox="0 0 10 10"><circle cx="5" cy="5" r="3.8" stroke="#fff" stroke-width="1.3" fill="none"/><path d="M2.4 2.4l5.2 5.2" stroke="#fff" stroke-width="1.3"/></svg>
<div class="t" style="left:602.5px;top:424.4px;font-size:6.5px;color:#fff">Toggle</div>
<div class="btn" style="left:629px;width:32px;background:#5fa1dc"></div>
<svg class="a" style="left:632px;top:421.5px" width="10" height="10" viewBox="0 0 10 10"><rect x="1" y="3" width="6" height="6" stroke="#fff" stroke-width="1.1" fill="none"/><path d="M3 3V1h6v6H7" stroke="#fff" stroke-width="1.1" fill="none"/></svg>
<div class="t" style="left:644.9px;top:424.4px;font-size:6.5px;color:#fff">Copy</div>
<div class="btn" style="left:666px;width:32px;background:#5fa1dc"></div>
<svg class="a" style="left:669px;top:421.5px" width="10" height="10" viewBox="0 0 10 10"><path d="M1 1h6.5L9 2.5V9H1z" fill="#fff"/><rect x="3" y="1.5" width="3.5" height="2.3" fill="#5fa1dc"/><rect x="3" y="5.6" width="4" height="2.6" fill="#5fa1dc"/></svg>
<div class="t" style="left:681.8px;top:424.4px;font-size:6.5px;color:#fff">Save</div>
<div class="btn" style="left:703px;width:45.7px;background:#f0a848"></div>
<svg class="a" style="left:705px;top:421.5px" width="10" height="10" viewBox="0 0 10 10"><path d="M5 1v8M1 5h8" stroke="#fff" stroke-width="2"/></svg>
<div class="t" style="left:718.5px;top:424.4px;font-size:6.5px;color:#fff">Separator</div>
<!-- cursor -->
<svg class="a" style="left:733px;top:229px" width="9" height="12" viewBox="0 0 9 12"><path d="M1 1v8.5l2.2-2 1.6 3.5 1.5-.7-1.6-3.3h3z" fill="#fff" stroke="#222" stroke-width=".8"/></svg>
<!-- scrollbar -->
<div class="a" style="left:767px;top:77.7px;width:8px;height:366.5px;background:#fdfdfd;border-radius:0 5px 5px 0"></div>
<div class="a" style="left:768.7px;top:90px;width:4.6px;height:291px;background:#8b8b8b;border-radius:2.3px"></div>
<svg class="a" style="left:768px;top:82px" width="6" height="4" viewBox="0 0 6 4"><path d="M.5 3.5L3 .5l2.5 3z" fill="#777"/></svg>
<svg class="a" style="left:768px;top:436px" width="6" height="4" viewBox="0 0 6 4"><path d="M.5 .5L3 3.5l2.5-3z" fill="#777"/></svg>
<!-- edge sidebar icons -->
<svg class="a" style="left:780px;top:83px" width="12" height="250" viewBox="0 0 12 250">
<circle cx="5" cy="5" r="3.3" fill="none" stroke="#333" stroke-width="1"/><path d="M7.3 7.3l3 3" stroke="#8a3fd1" stroke-width="1.6"/>
<path d="M1.5 27.5l5.2-5.2h4v4l-5.2 5.2z" fill="#3a79e0"/><circle cx="8.6" cy="24.4" r=".8" fill="#fff"/>
<rect x="1" y="49" width="10" height="6" rx=".8" fill="#e05a1c"/><path d="M4 49v-1.5h4V49" stroke="#e05a1c" stroke-width="1" fill="none"/><path d="M1 51.5h10" stroke="#fff" stroke-width=".6"/><rect x="5" y="51" width="2" height="1.5" fill="#fff"/>
<circle cx="4.5" cy="68" r="1.8" fill="#555"/><path d="M2 74h5l-.6-2.5h-3.8z" fill="#555"/><path d="M8 66h3l-1.5 3 1.5 3H8l1.5-3z" fill="#8a5ad8"/>
<defs><linearGradient id="m365" x1="0" y1="0" x2="1" y2="1"><stop offset="0" stop-color="#3a8ef0"/><stop offset=".5" stop-color="#7b4fd6"/><stop offset="1" stop-color="#c24fd0"/></linearGradient></defs><path d="M6 87.6l3.2 1.85v3.7L6 95l-3.2-1.85v-3.7z" fill="none" stroke="url(#m365)" stroke-width="2" stroke-linejoin="round"/>
<rect x="3" y="107.5" width="8" height="8" rx="1" fill="#1784d6"/><rect x="1" y="109" width="6" height="6" rx=".8" fill="#0a5fb0"/><circle cx="4" cy="112" r="1.6" fill="none" stroke="#fff" stroke-width=".9"/>
<path d="M1 130l10-3.5-3.5 8-2.3-2.2z" fill="#1f7fd8"/><path d="M5.2 132.3l1 2.5" stroke="#1660a8" stroke-width=".8"/>
</svg>
<div class="a" style="left:779px;top:233.5px;width:15px;height:.8px;background:#d8d8d8"></div>
<svg class="a" style="left:780px;top:244px" width="16" height="12" viewBox="0 0 16 12"><path d="M6 3v7M2.5 6.5h7" stroke="#333" stroke-width=".9"/><circle cx="13.5" cy="1.8" r="1.5" fill="#e0001b"/></svg>
<div class="a" style="left:779px;top:423px;width:15px;height:.8px;background:#d8d8d8"></div>
<svg class="a" style="left:781.4px;top:430px" width="10" height="10" viewBox="0 0 10 10"><path d="M3.65 1.99 L4.09 0.49 L5.91 0.49 L6.35 1.99 L6.94 2.33 L8.45 1.95 L9.36 3.54 L8.28 4.66 L8.28 5.34 L9.36 6.46 L8.45 8.05 L6.94 7.67 L6.35 8.01 L5.91 9.51 L4.09 9.51 L3.65 8.01 L3.06 7.67 L1.55 8.05 L0.64 6.46 L1.72 5.34 L1.72 4.66 L0.64 3.54 L1.55 1.95 L3.06 2.33z" fill="none" stroke="#333" stroke-width=".8" stroke-linejoin="round"/><circle cx="5" cy="5" r="1.2" fill="none" stroke="#333" stroke-width=".8"/></svg>
<!-- taskbar -->
<div id="tb" class="a"></div>
<div class="a" style="left:125px;top:447px;width:25.4px;height:21px;background:#0b1820"></div>
<svg class="a" style="left:133px;top:452.5px" width="10" height="10" viewBox="0 0 10 10"><path d="M0 1.4l4.2-.6v3.9H0zM4.8.7L10 0v4.7H4.8zM0 5.3h4.2v3.9L0 8.6zM4.8 5.3H10V10l-5.2-.7z" fill="#fff"/></svg>
<div class="a" style="left:150.4px;top:447px;width:182.3px;height:21px;background:#f1f1f1"></div>
<svg class="a" style="left:157px;top:452px" width="10" height="10" viewBox="0 0 10 10"><circle cx="6" cy="4" r="3" fill="none" stroke="#222" stroke-width=".9"/><path d="M3.8 6.2L1 9" stroke="#222" stroke-width="1"/></svg>
<div class="t" style="left:171.8px;top:453.8px;font-size:7.65px;color:#222">Type here to search</div>
<svg class="a" style="left:340px;top:452.5px" width="10" height="10" viewBox="0 0 10 10"><rect x="1" y="1.5" width="5" height="7" fill="none" stroke="#fff" stroke-width=".9"/><path d="M8 1v8M1 1h5M1 9h5" stroke="#fff" stroke-width=".9"/></svg>
<div class="a" style="left:359.7px;top:447px;width:25.3px;height:21px;background:#2f3c44"></div>
<svg class="a" style="left:366px;top:451px" width="13" height="13" viewBox="0 0 13 13"><defs><linearGradient id="eg" x1="0" y1="0" x2="1" y2="1"><stop offset="0" stop-color="#35c1f1"/><stop offset=".5" stop-color="#1b82d8"/><stop offset="1" stop-color="#0c59a4"/></linearGradient></defs><circle cx="6.5" cy="6.5" r="6" fill="url(#eg)"/><path d="M3 7.5c.3-2.5 2.3-3.8 4.3-3.8 2.2 0 3.7 1.4 3.7 3.1H5.3c.2 1.7 1.8 2.6 3.6 2.6 1.2 0 2.5-.4 3.3-1.2-.8 2.2-3 3.7-5.5 3.7" fill="#5fe07a"/></svg>
<div class="a" style="left:359.7px;top:466.3px;width:25.3px;height:1.7px;background:#86b6e0"></div>
<svg class="a" style="left:392px;top:452px" width="13" height="11" viewBox="0 0 13 11"><path d="M.5 1.5h4.5l1 1.2h6.5V10H.5z" fill="#f2c53d"/><rect x=".5" y="4" width="12" height="6" fill="#ffd868"/><rect x="4.5" y="6" width="4" height="3" fill="#2a8ad8"/></svg>
<svg class="a" style="left:417px;top:451.5px" width="13" height="11" viewBox="0 0 13 11"><rect x=".5" y=".5" width="12" height="10" fill="#111" stroke="#aaa" stroke-width=".8"/><rect x=".5" y=".5" width="12" height="1.8" fill="#ccc"/><path d="M2.2 4l1.3 1-1.3 1M4.5 6.2h2" stroke="#fff" stroke-width=".7" fill="none"/></svg>
<div class="a" style="left:413.7px;top:466.3px;width:21px;height:1.7px;background:#86b6e0"></div>
<svg class="a" style="left:443px;top:451px" width="13" height="13" viewBox="0 0 13 13"><circle cx="6.5" cy="6.5" r="6" fill="#f39a2d"/><path d="M3 6c1.2 1.6 2.2 2.6 3.5 3.2C7.8 8.6 8.8 7.6 10 6" stroke="#fff" stroke-width="1" fill="none"/><path d="M6.5 3.5v5" stroke="#fff" stroke-width=".9"/></svg>
<div class="a" style="left:437.8px;top:466.3px;width:23px;height:1.7px;background:#86b6e0"></div>
<svg class="a" style="left:702px;top:452.5px" width="32" height="10" viewBox="0 0 32 10"><path d="M1.5 6.5L4.5 3.5l3 3" stroke="#fff" stroke-width=".9" fill="none"/><rect x="13" y="2" width="8" height="5.5" fill="none" stroke="#fff" stroke-width=".8"/><path d="M15 9h4M17 7.5V9M12.5 1.5v7" stroke="#fff" stroke-width=".8"/><path d="M24 3.8h1.6L28 1.8v6.4L25.6 6.2H24z" fill="none" stroke="#fff" stroke-width=".8"/><path d="M29.3 3.5c.6.8.6 2.2 0 3M30.6 2.5c1 1.4 1 3.6 0 5" stroke="#fff" stroke-width=".6" fill="none"/></svg>
<div class="t" style="left:738px;top:449px;width:30px;text-align:center;font-size:6.3px;color:#fff">8:06 AM</div>
<div class="t" style="left:735px;top:458.5px;width:36px;text-align:center;font-size:6.3px;color:#fff">5/23/2024</div>
<svg class="a" style="left:775px;top:451px" width="16" height="16" viewBox="0 0 16 16"><path d="M1.3 1.8h8.7v7.2H1.3z" fill="#fff"/><path d="M2.5 3.8h6.3M2.5 5.5h6.3" stroke="#8a8f94" stroke-width=".9"/><circle cx="9.7" cy="10.3" r="3.9" fill="#2b2e31" stroke="#5a5e62" stroke-width=".6"/><text x="9.8" y="12.4" font-size="5.5" font-family="Liberation Sans" fill="#ddd" text-anchor="middle">3</text></svg>
<div class="a" style="left:795.8px;top:447px;width:.8px;height:21px;background:#2c3a44"></div><div class="a" style="left:798.5px;top:447px;width:1.5px;height:21px;background:#1c3a3f"></div>
</body></html>
